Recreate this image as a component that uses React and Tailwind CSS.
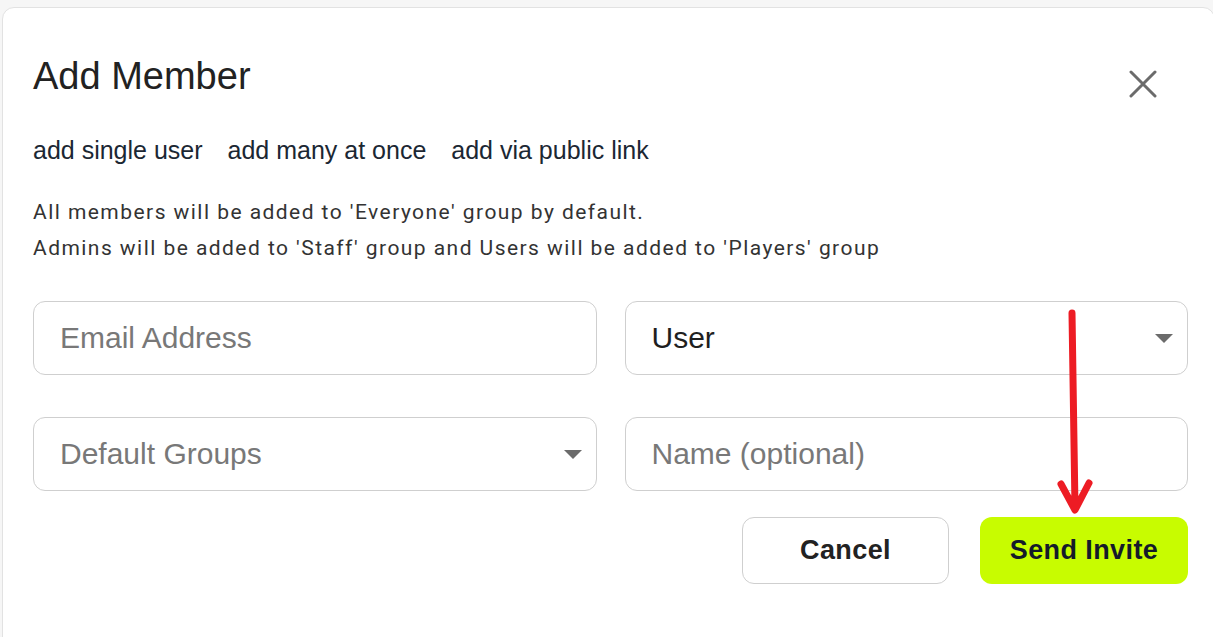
import { useState } from 'react';

const TABS = ['add single user', 'add many at once', 'add via public link'];

function Caret() {
  return (
    <svg width="18" height="9" viewBox="0 0 18 9" className="shrink-0">
      <path d="M0 0 L18 0 L9 9 Z" fill="#6b6b6b" />
    </svg>
  );
}

function Field({ placeholder, value, select }) {
  return (
    <div className="flex items-center h-[74px] rounded-[12px] border border-[#cfcfcf] bg-white pl-[26px] pr-[14px]">
      <span
        className={`flex-1 text-[30px] leading-none font-['Liberation_Sans',Arial,sans-serif] ${
          value ? 'text-[#1f1f1f]' : 'text-[#787878]'
        }`}
      >
        {value || placeholder}
      </span>
      {select && <Caret />}
    </div>
  );
}

export default function App() {
  const [tab] = useState(0);

  return (
    <div className="relative h-[637px] w-full overflow-hidden bg-[#f6f6f6] pt-[7px] pl-[2px] font-['Liberation_Sans',Arial,sans-serif]">
      <div className="w-[1213px] h-[700px] rounded-[12px] border border-[#e2e2e2] bg-white pt-[49px] pl-[30px] pr-[26px]">
        {/* Header */}
        <div className="flex items-start justify-between">
          <h1 className="text-[38px] leading-none text-[#222]">Add Member</h1>
          <button className="mt-[13px] mr-[31px]" title="Close">
            <svg width="28" height="28" viewBox="0 0 28 28">
              <path d="M2 2 L26 26 M26 2 L2 26" stroke="#6b6b6b" strokeWidth="3" strokeLinecap="round" />
            </svg>
          </button>
        </div>

        {/* Tabs */}
        <div className="mt-[37px] flex items-center gap-[25px] h-[30px]">
          {TABS.map((t, i) => (
            <span
              key={t}
              className={`text-[25px] leading-none ${i === tab ? 'text-[#1b2733]' : 'text-[#1b2733]'}`}
            >
              {t}
            </span>
          ))}
        </div>

        {/* Info */}
        <div className="mt-[29px] font-['Roboto',Arial,sans-serif] text-[21px] leading-[36px] tracking-[1.45px] text-[#333]">
          <p>All members will be added to 'Everyone' group by default.</p>
          <p>Admins will be added to 'Staff' group and Users will be added to 'Players' group</p>
        </div>

        {/* Form */}
        <div className="mt-[35px] grid grid-cols-2 gap-x-[28px] gap-y-[42px]">
          <Field placeholder="Email Address" />
          <Field value="User" select />
          <Field placeholder="Default Groups" select />
          <Field placeholder="Name (optional)" />
        </div>

        {/* Actions */}
        <div className="mt-[26px] flex justify-end gap-[31px]">
          <button className="w-[207px] h-[67px] rounded-[12px] border border-[#cfcfcf] bg-white text-[27px] font-bold tracking-[0.4px] text-[#222]">
            Cancel
          </button>
          <button className="w-[208px] h-[67px] rounded-[12px] bg-[#c8fc00] text-[27px] font-bold tracking-[0.4px] text-[#141a2a]">
            Send Invite
          </button>
        </div>
      </div>

      {/* annotation arrow */}
      <svg className="absolute left-0 top-0 pointer-events-none" width="1213" height="637" viewBox="0 0 1213 637">
        <path
          d="M1072 313 L1075 508 M1061 484 L1075 510 L1089 483"
          fill="none"
          stroke="#ed1c24"
          strokeWidth="7"
          strokeLinecap="round"
          strokeLinejoin="round"
        />
      </svg>
    </div>
  );
}
